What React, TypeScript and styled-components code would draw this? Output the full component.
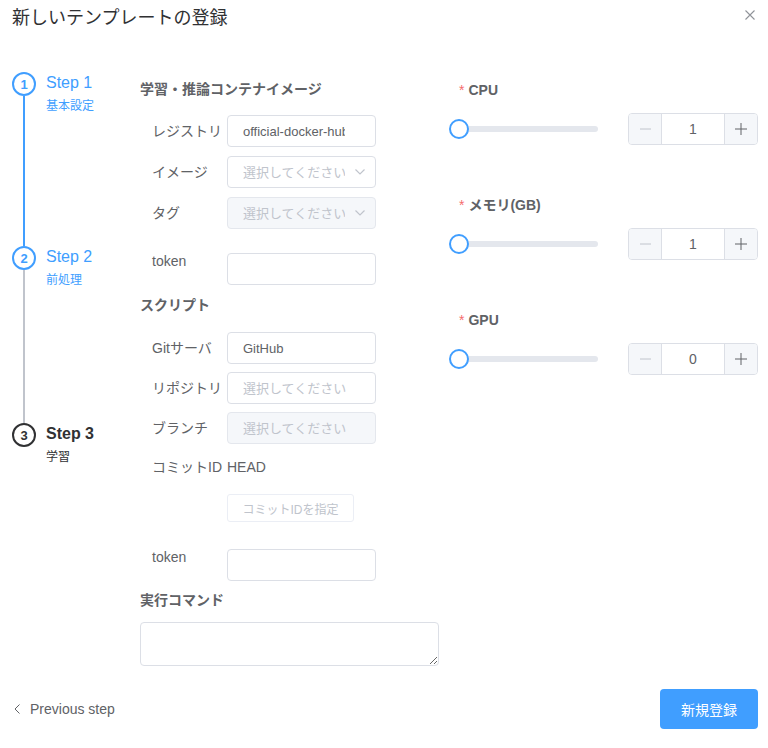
import React from "react";
import styled, { createGlobalStyle } from "styled-components";

const GlobalStyle = createGlobalStyle`
  html, body { margin: 0; padding: 0; background: #ffffff; }
  body {
    font-family: "Liberation Sans", Arial, "Noto Sans CJK JP", sans-serif;
    color: #606266;
  }
  * { box-sizing: border-box; }
`;

const Page = styled.div`
  width: 768px;
  height: 748px;
  background: #fff;
  overflow: hidden;
`;

const Header = styled.header`
  display: flex;
  justify-content: space-between;
  align-items: flex-start;
  padding: 6px 13px 0 12px;
`;

const Title = styled.h1`
  margin: 0;
  font-size: 18px;
  line-height: 24px;
  font-weight: normal;
  color: #303133;
`;

const CloseButton = styled.button`
  margin-top: 4px;
  width: 10px;
  height: 10px;
  padding: 0;
  border: none;
  background: none;
  display: flex;
  cursor: pointer;
`;

const Body = styled.div`
  display: flex;
  margin-top: 42px;
  padding-left: 12px;
`;

const Steps = styled.div`
  width: 128px;
  flex-shrink: 0;
  display: flex;
  flex-direction: column;
`;

const Step = styled.div<{ $h?: number }>`
  display: flex;
  gap: 10px;
  height: ${(p) => (p.$h ? `${p.$h}px` : "auto")};
`;

const StepHead = styled.div`
  width: 24px;
  display: flex;
  flex-direction: column;
  align-items: center;
`;

const StepIcon = styled.div<{ $c: string }>`
  width: 24px;
  height: 24px;
  border-radius: 50%;
  border: 2px solid ${(p) => p.$c};
  color: ${(p) => p.$c};
  display: flex;
  align-items: center;
  justify-content: center;
  font-size: 13px;
  font-weight: bold;
  flex-shrink: 0;
`;

const StepLine = styled.div<{ $c: string }>`
  width: 2px;
  flex: 1;
  background: ${(p) => p.$c};
`;

const StepMain = styled.div<{ $c: string; $bold?: boolean }>`
  display: flex;
  flex-direction: column;
  color: ${(p) => p.$c};
  font-weight: ${(p) => (p.$bold ? "bold" : "normal")};
`;

const StepTitle = styled.div`
  font-size: 16px;
  line-height: 22px;
`;

const StepDesc = styled.div`
  font-size: 12px;
  line-height: 20px;
  font-weight: normal;
  margin-top: 2px;
`;

const FormCol = styled.div`
  width: 299px;
  flex-shrink: 0;
  display: flex;
  flex-direction: column;
`;

const SectionTitle = styled.div<{ $mt: number }>`
  margin-top: ${(p) => p.$mt}px;
  font-size: 14px;
  line-height: 20px;
  font-weight: bold;
  color: #606266;
`;

const FormRow = styled.div<{ $mt: number; $top?: boolean }>`
  display: flex;
  align-items: ${(p) => (p.$top ? "flex-start" : "center")};
  padding-left: 12px;
  margin-top: ${(p) => p.$mt}px;
`;

const FieldLabel = styled.label<{ $top?: boolean }>`
  width: 75px;
  flex-shrink: 0;
  font-size: 14px;
  color: #606266;
  line-height: ${(p) => (p.$top ? "16px" : "32px")};
  white-space: nowrap;
`;

const ValueText = styled.span`
  font-size: 14px;
  line-height: 32px;
  color: #606266;
`;

const SelectBox = styled.div`
  position: relative;
  width: 149px;
  height: 32px;
`;

const TextInput = styled.input<{ $select?: boolean }>`
  width: 149px;
  height: 32px;
  border: 1px solid #dcdfe6;
  border-radius: 4px;
  padding: 0 ${(p) => (p.$select ? "30px" : "15px")} 0 15px;
  font-family: inherit;
  font-size: 13px;
  color: #606266;
  background: #fff;
  outline: none;
  &::placeholder { color: #c0c4cc; }
  &:disabled {
    background: #f5f7fa;
    border-color: #e4e7ed;
    color: #c0c4cc;
  }
`;

const Chevron = styled.svg`
  position: absolute;
  right: 11px;
  top: 13px;
`;

const GhostButton = styled.button`
  margin-left: 75px;
  width: 127px;
  height: 28px;
  border: 1px solid #ebeef5;
  border-radius: 3px;
  background: #fff;
  color: #c0c4cc;
  font-family: inherit;
  font-size: 12px;
  padding: 0;
`;

const CommandArea = styled.textarea`
  margin-top: 12px;
  width: 299px;
  height: 44px;
  border: 1px solid #dcdfe6;
  border-radius: 4px;
  font-family: inherit;
  font-size: 14px;
  color: #606266;
  padding: 5px 15px;
  resize: vertical;
  outline: none;
`;

const ResourceCol = styled.div`
  width: 309px;
  margin-left: 10px;
  display: flex;
  flex-direction: column;
`;

const ResourceLabel = styled.div<{ $mt: number }>`
  margin-top: ${(p) => p.$mt}px;
  padding-left: 10px;
  font-size: 14px;
  line-height: 20px;
  font-weight: bold;
  color: #606266;
`;

const Required = styled.span`
  color: #f56c6c;
  font-weight: normal;
  margin-right: 4px;
`;

const SliderRow = styled.div`
  margin-top: 13px;
  height: 32px;
  display: flex;
  align-items: center;
  justify-content: space-between;
`;

const Slider = styled.div`
  position: relative;
  width: 150px;
  height: 20px;
  display: flex;
  align-items: center;
`;

const Track = styled.div`
  margin-left: 10px;
  width: 139px;
  height: 6px;
  border-radius: 3px;
  background: #e4e7ed;
`;

const Thumb = styled.div`
  position: absolute;
  left: 0;
  top: 0;
  width: 20px;
  height: 20px;
  border-radius: 50%;
  border: 2px solid #409eff;
  background: #fff;
`;

const NumberInput = styled.div`
  width: 130px;
  height: 32px;
  display: flex;
  border: 1px solid #dcdfe6;
  border-radius: 4px;
  overflow: hidden;
`;

const NumBtn = styled.div<{ $side: "left" | "right" }>`
  width: 33px;
  flex-shrink: 0;
  background: #f5f7fa;
  display: flex;
  align-items: center;
  justify-content: center;
  ${(p) =>
    p.$side === "left" ? "border-right: 1px solid #dcdfe6;" : "border-left: 1px solid #dcdfe6;"}
`;

const NumValue = styled.div`
  flex: 1;
  text-align: center;
  font-size: 14px;
  line-height: 30px;
  color: #606266;
`;

const Footer = styled.footer`
  margin-top: 23px;
  display: flex;
  align-items: center;
  justify-content: space-between;
  padding: 0 10px 0 14px;
`;

const PrevLink = styled.button`
  display: flex;
  align-items: center;
  gap: 10px;
  border: none;
  background: none;
  padding: 0;
  font-family: inherit;
  font-size: 14px;
  color: #606266;
  cursor: pointer;
`;

const PrimaryButton = styled.button`
  height: 40px;
  width: 98px;
  padding: 0;
  border: none;
  border-radius: 4px;
  background: #409eff;
  color: #fff;
  font-family: inherit;
  font-size: 14px;
  cursor: pointer;
`;

const ChevronDown = () => (
  <Chevron width="10" height="6" viewBox="0 0 10 6">
    <path d="M0.5 0.5 L5 5 L9.5 0.5" fill="none" stroke="#c0c4cc" strokeWidth="1.2" />
  </Chevron>
);

const Select = ({ disabled, value }: { disabled?: boolean; value?: string }) => (
  <SelectBox>
    <TextInput $select disabled={disabled} placeholder="選択してください" defaultValue={value} readOnly />
    <ChevronDown />
  </SelectBox>
);

const Resource = ({ label, value, mt }: { label: string; value: number; mt: number }) => (
  <>
    <ResourceLabel $mt={mt}>
      <Required>*</Required>
      {label}
    </ResourceLabel>
    <SliderRow>
      <Slider>
        <Track />
        <Thumb />
      </Slider>
      <NumberInput>
        <NumBtn $side="left">
          <svg width="11" height="2" viewBox="0 0 11 2">
            <path d="M0 1 H11" stroke="#c0c4cc" strokeWidth="1" />
          </svg>
        </NumBtn>
        <NumValue>{value}</NumValue>
        <NumBtn $side="right">
          <svg width="12" height="12" viewBox="0 0 12 12">
            <path d="M0 6 H12 M6 0 V12" stroke="#606266" strokeWidth="1" />
          </svg>
        </NumBtn>
      </NumberInput>
    </SliderRow>
  </>
);

export default function App() {
  return (
    <Page>
      <GlobalStyle />
      <Header>
        <Title>新しいテンプレートの登録</Title>
        <CloseButton aria-label="close">
          <svg width="10" height="10" viewBox="0 0 10 10">
            <path d="M0.5 0.5 L9.5 9.5 M9.5 0.5 L0.5 9.5" stroke="#909399" strokeWidth="1.1" />
          </svg>
        </CloseButton>
      </Header>
      <Body>
        <Steps>
          <Step $h={174}>
            <StepHead>
              <StepIcon $c="#409eff">1</StepIcon>
              <StepLine $c="#409eff" />
            </StepHead>
            <StepMain $c="#409eff">
              <StepTitle>Step 1</StepTitle>
              <StepDesc>基本設定</StepDesc>
            </StepMain>
          </Step>
          <Step $h={177}>
            <StepHead>
              <StepIcon $c="#409eff">2</StepIcon>
              <StepLine $c="#c0c4cc" />
            </StepHead>
            <StepMain $c="#409eff">
              <StepTitle>Step 2</StepTitle>
              <StepDesc>前処理</StepDesc>
            </StepMain>
          </Step>
          <Step>
            <StepHead>
              <StepIcon $c="#303133">3</StepIcon>
            </StepHead>
            <StepMain $c="#303133" $bold>
              <StepTitle>Step 3</StepTitle>
              <StepDesc>学習</StepDesc>
            </StepMain>
          </Step>
        </Steps>

        <FormCol>
          <SectionTitle $mt={7}>学習・推論コンテナイメージ</SectionTitle>
          <FormRow $mt={16}>
            <FieldLabel>レジストリ</FieldLabel>
            <SelectBox>
              <TextInput $select defaultValue="official-docker-hub" readOnly />
            </SelectBox>
          </FormRow>
          <FormRow $mt={9}>
            <FieldLabel>イメージ</FieldLabel>
            <Select />
          </FormRow>
          <FormRow $mt={9}>
            <FieldLabel>タグ</FieldLabel>
            <Select disabled />
          </FormRow>
          <FormRow $mt={24} $top>
            <FieldLabel $top>token</FieldLabel>
            <TextInput />
          </FormRow>

          <SectionTitle $mt={10}>スクリプト</SectionTitle>
          <FormRow $mt={17}>
            <FieldLabel>Gitサーバ</FieldLabel>
            <TextInput defaultValue="GitHub" readOnly />
          </FormRow>
          <FormRow $mt={8}>
            <FieldLabel>リポジトリ</FieldLabel>
            <TextInput placeholder="選択してください" readOnly />
          </FormRow>
          <FormRow $mt={8}>
            <FieldLabel>ブランチ</FieldLabel>
            <TextInput placeholder="選択してください" disabled />
          </FormRow>
          <FormRow $mt={7}>
            <FieldLabel>コミットID</FieldLabel>
            <ValueText>HEAD</ValueText>
          </FormRow>
          <FormRow $mt={11}>
            <GhostButton>コミットIDを指定</GhostButton>
          </FormRow>
          <FormRow $mt={27} $top>
            <FieldLabel $top>token</FieldLabel>
            <TextInput />
          </FormRow>

          <SectionTitle $mt={9}>実行コマンド</SectionTitle>
          <CommandArea />
        </FormCol>

        <ResourceCol>
          <Resource label="CPU" value={1} mt={8} />
          <Resource label="メモリ(GB)" value={1} mt={50} />
          <Resource label="GPU" value={0} mt={50} />
        </ResourceCol>
      </Body>

      <Footer>
        <PrevLink>
          <svg width="6" height="10" viewBox="0 0 6 10">
            <path d="M5.5 0.5 L1 5 L5.5 9.5" fill="none" stroke="#606266" strokeWidth="1" />
          </svg>
          Previous step
        </PrevLink>
        <PrimaryButton>新規登録</PrimaryButton>
      </Footer>
    </Page>
  );
}
